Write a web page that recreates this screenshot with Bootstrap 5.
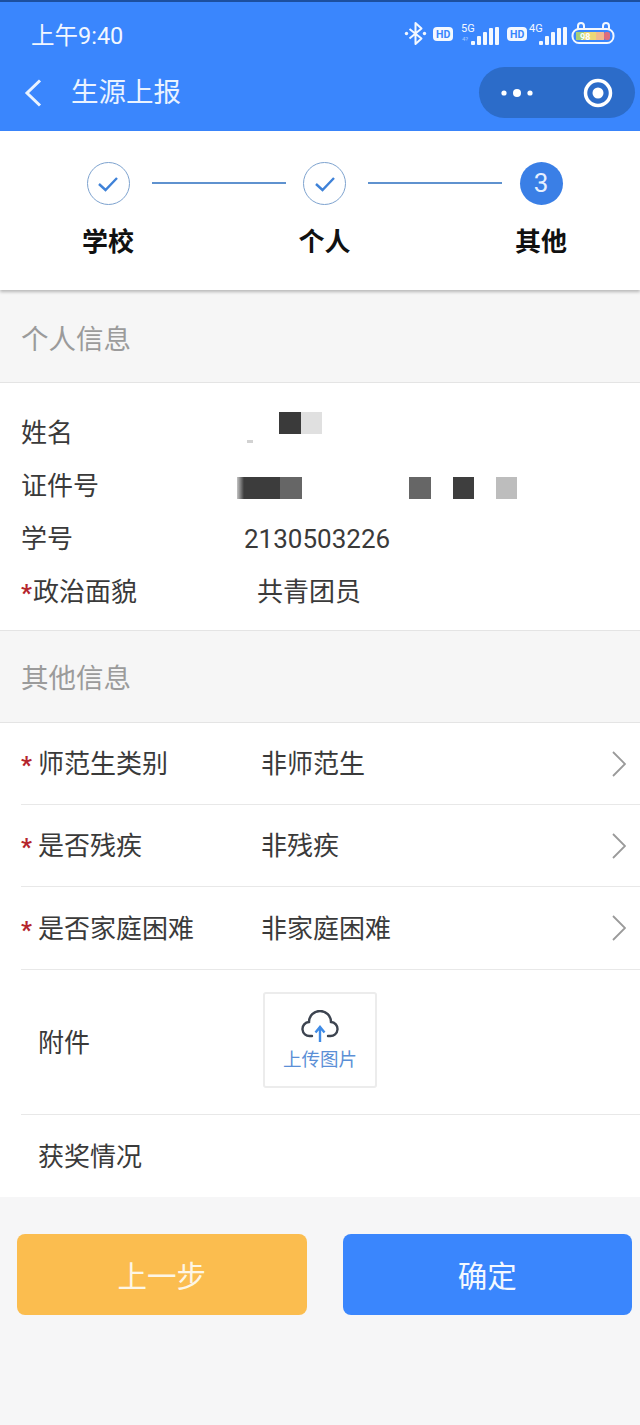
<!DOCTYPE html>
<html lang="zh-CN">
<head>
<meta charset="utf-8">
<link href="https://cdn.jsdelivr.net/npm/bootstrap@5.3.0/dist/css/bootstrap.min.css" rel="stylesheet">
<style>
html,body{margin:0;background:#f6f6f7;}
body{width:640px;height:1425px;overflow:hidden;font-family:Roboto,"Noto Sans CJK SC",sans-serif;font-size:26px;color:#3a3a3a;line-height:1.2;}
.topbar{height:131px;background:#3a86fd;border-top:2px solid #1c4f9e;color:#fff;}
.statusline{height:51px;padding:19px 0 0 31px;}
.clock{font-size:23.5px;line-height:30px;color:#f2f7ff;}
.titleline{height:66px;padding:14px 5px 0 24px;}
.pagetitle{font-size:27.5px;line-height:51px;margin-left:28px;color:#eaf3ff;}
.capsule{width:156px;height:51px;border-radius:26px;background:#2c6cc9;}
.capsule-side{width:78px;}
.stepper{height:159px;background:#fff;box-shadow:0 2px 3px rgba(0,0,0,.25);position:relative;padding:31px 0 0 72px;}
.stepcol{width:72px;flex:none;}
.stepdot{width:43px;height:43px;border-radius:50%;border:1.5px solid #7ea3cf;}
.stepdot-on{background:#3a7fe6;border:0;color:#e6f0ff;font-size:26px;}
.stepline{height:2px;width:134px;background:#5f92cf;margin:20px 3px 0 7.5px;flex:none;}
.steplabel{font-size:26px;font-weight:700;color:#111;margin-top:20px;line-height:34px;white-space:nowrap;}
.secthead{background:#f6f6f6;color:#9b9b9b;padding-left:21px;font-size:27.5px;border-bottom:1px solid #e4e4e4;height:93px;}
.sh1{padding-top:33px;}
.sh2{padding-top:31px;border-top:1px solid #e4e4e4;}
.infoblock{background:#fff;height:247px;padding:24px 0 0 21px;}
.inforow{height:53px;line-height:53px;}
.infokey{width:223px;flex:none;}
.infokey-wide{width:236px;}
.req{color:#b5252d;font-size:24px;font-weight:700;display:inline-block;width:12px;line-height:1;}
.req-form{width:17px;}
.blot{height:22px;flex:none;}
.blotwrap1{padding-top:5px;}
.blotwrap2{padding-top:17px;}
.tinymark{display:block;width:6px;height:3px;background:#d2d2d2;margin:28px 0 0 3px;}
.b-spacer{width:35px;}
.b-dark{width:22px;background:#3a3a3a;}
.b-light{width:21px;background:#e0e0e0;}
.b-fade{width:43px;margin-left:-7px;background:linear-gradient(90deg,#c4c4c4 0,#3c3c3c 7px);}
.b-mid{width:22px;background:#666;}
.b-mid-gap{margin-left:107px;}
.b-dark2{width:21px;margin-left:22px;background:#3e3e3e;}
.b-pale{width:21px;margin-left:22px;background:#bdbdbd;}
.formblock{background:#fff;}
.formrow{margin-left:21px;border-bottom:1px solid #e8e8e8;height:82px;}
.formrow-tall{height:83px;}
.formrow-upload{height:145px;}
.formrow-last{border-bottom:0;}
.fkey{width:241px;flex:none;padding-top:3px;}
.fkey-indent{padding-left:17px;}
.fval{flex:1;padding-top:3px;margin-left:-1px;}
.chev{margin-right:14px;}
.upbox{width:114px;height:96px;border:2px solid #ececec;border-radius:3px;color:#5b8fd6;font-size:18.5px;background:#fff;margin-top:-4px;margin-left:1px;}
.uplabel{margin-top:7px;line-height:22px;}
.actionbar{padding:37px 8px 0 17px;gap:36px;}
.act{width:290px;height:81px;border:0;border-radius:8px;color:#fdf6e6;font-size:29.5px;padding:5px 0 0;}
.act-y{background:#fbbd4f;}
.act-y:hover,.act-y:active{background:#fbbd4f;color:#fdf6e6;}
.act-b{background:#3a86fd;color:#f3f8ff;}
.act-b:hover,.act-b:active{background:#3a86fd;color:#f3f8ff;}
</style>
</head>
<body>
<div class="topbar">
  <div class="statusline d-flex justify-content-between align-items-start">
    <span class="clock">上午9:40</span>
    <svg width="240" height="30" viewBox="0 0 240 30" fill="none" font-family="Roboto,sans-serif">
      <path d="M9.500 8l12 9.500-6 5.500V2l6 5.500-12 10" stroke="#f3f8ff" stroke-width="2" stroke-linejoin="round"/>
      <circle cx="6.500" cy="12.500" r="1.700" fill="#f3f8ff"/><circle cx="24.500" cy="12.500" r="1.700" fill="#f3f8ff"/>
      <rect x="33" y="6" width="20" height="14" rx="4" fill="#f3f8ff"/>
      <text x="36" y="17" font-size="10.500" font-weight="700" fill="#3a86fd">HD</text>
      <text x="61" y="11" font-size="11" fill="#f3f8ff">5G</text>
      <text x="62" y="20" font-size="6" fill="#a9ccff">4?</text>
      <g fill="#f3f8ff"><rect x="71" y="20" width="4" height="4" rx="1"/><rect x="77" y="15" width="4" height="9" rx="1"/><rect x="83" y="11" width="4" height="13" rx="1"/><rect x="89" y="7" width="4" height="17" rx="1"/><rect x="95" y="6" width="4" height="18" rx="1"/></g>
      <rect x="107" y="6" width="20" height="14" rx="4" fill="#f3f8ff"/>
      <text x="110" y="17" font-size="10.500" font-weight="700" fill="#3a86fd">HD</text>
      <text x="129" y="11" font-size="11" fill="#f3f8ff">4G</text>
      <g fill="#f3f8ff"><rect x="139" y="20" width="4" height="4" rx="1"/><rect x="145" y="15" width="4" height="9" rx="1"/><rect x="151" y="11" width="4" height="13" rx="1"/><rect x="157" y="7" width="4" height="17" rx="1"/><rect x="163" y="6" width="4" height="18" rx="1"/></g>
      <rect x="172.500" y="8" width="41" height="14" rx="6.500" fill="none" stroke="#f3f8ff" stroke-width="2"/>
      <path d="M178 8V5a3 3 0 016 0v3M203 8V5a3 3 0 016 0v3" stroke="#f3f8ff" stroke-width="2"/>
      <rect x="176" y="11" width="8" height="8" fill="#a5cf79"/><rect x="184" y="11" width="12" height="8" fill="#ecd777"/><rect x="196" y="11" width="8" height="8" fill="#f2b98e"/><rect x="204" y="11" width="6" height="8" rx="2" fill="#dd6d7d"/>
      <text x="180" y="18.500" font-size="9" font-weight="700" fill="#fff">98</text>
    </svg>
  </div>
  <div class="titleline d-flex align-items-start">
    <svg width="19" height="51" viewBox="0 0 19 51" fill="none"><path d="M16 13.500L3 26l13 12.500" stroke="#eaf3ff" stroke-width="3"/></svg>
    <span class="pagetitle flex-grow-1">生源上报</span>
    <div class="capsule d-flex align-items-center">
      <div class="capsule-side d-flex justify-content-center">
        <svg width="34" height="12" viewBox="0 0 34 12"><circle cx="3" cy="6" r="2.600" fill="#fff"/><circle cx="16" cy="6" r="4" fill="#fff"/><circle cx="29" cy="6" r="2.600" fill="#fff"/></svg>
      </div>
      <div class="capsule-side d-flex justify-content-center">
        <svg width="30" height="30" viewBox="0 0 30 30" class="ms-1"><circle cx="15" cy="15" r="12.500" fill="none" stroke="#fff" stroke-width="3.500"/><circle cx="15" cy="15" r="5.500" fill="#fff"/></svg>
      </div>
    </div>
  </div>
</div>

<div class="stepper d-flex">
  <div class="stepcol d-flex flex-column align-items-center">
    <div class="stepdot d-flex align-items-center justify-content-center"><svg width="22" height="16" viewBox="0 0 22 16" fill="none"><path d="M2 8l6.500 6L20 2" stroke="#3f82d8" stroke-width="2.400"/></svg></div>
    <div class="steplabel">学校</div>
  </div>
  <div class="stepline"></div>
  <div class="stepcol d-flex flex-column align-items-center">
    <div class="stepdot d-flex align-items-center justify-content-center"><svg width="22" height="16" viewBox="0 0 22 16" fill="none"><path d="M2 8l6.500 6L20 2" stroke="#3f82d8" stroke-width="2.400"/></svg></div>
    <div class="steplabel">个人</div>
  </div>
  <div class="stepline"></div>
  <div class="stepcol d-flex flex-column align-items-center">
    <div class="stepdot stepdot-on d-flex align-items-center justify-content-center">3</div>
    <div class="steplabel">其他</div>
  </div>
</div>

<div class="secthead sh1">个人信息</div>
<div class="infoblock">
  <div class="inforow d-flex"><span class="infokey">姓名</span>
    <span class="blotwrap1 d-flex align-items-start"><span class="blot b-spacer"><span class="tinymark"></span></span><span class="blot b-dark"></span><span class="blot b-light"></span></span></div>
  <div class="inforow d-flex"><span class="infokey">证件号</span>
    <span class="blotwrap2 d-flex align-items-start"><span class="blot b-fade"></span><span class="blot b-mid"></span><span class="blot b-mid b-mid-gap"></span><span class="blot b-dark2"></span><span class="blot b-pale"></span></span></div>
  <div class="inforow d-flex"><span class="infokey">学号</span><span>2130503226</span></div>
  <div class="inforow d-flex"><span class="infokey infokey-wide"><span class="req">*</span>政治面貌</span><span>共青团员</span></div>
</div>

<div class="secthead sh2">其他信息</div>
<div class="formblock">
  <div class="formrow d-flex align-items-center">
    <span class="fkey"><span class="req req-form">*</span>师范生类别</span><span class="fval">非师范生</span>
    <svg class="chev" width="14" height="26" viewBox="0 0 14 26" fill="none"><path d="M1 1l12 12L1 25" stroke="#9a9a9a" stroke-width="1.800"/></svg>
  </div>
  <div class="formrow d-flex align-items-center">
    <span class="fkey"><span class="req req-form">*</span>是否残疾</span><span class="fval">非残疾</span>
    <svg class="chev" width="14" height="26" viewBox="0 0 14 26" fill="none"><path d="M1 1l12 12L1 25" stroke="#9a9a9a" stroke-width="1.800"/></svg>
  </div>
  <div class="formrow formrow-tall d-flex align-items-center">
    <span class="fkey"><span class="req req-form">*</span>是否家庭困难</span><span class="fval">非家庭困难</span>
    <svg class="chev" width="14" height="26" viewBox="0 0 14 26" fill="none"><path d="M1 1l12 12L1 25" stroke="#9a9a9a" stroke-width="1.800"/></svg>
  </div>
  <div class="formrow formrow-upload d-flex align-items-center">
    <span class="fkey fkey-indent">附件</span>
    <div class="upbox d-flex flex-column align-items-center justify-content-center">
      <svg width="38" height="32" viewBox="0 0 38 32" fill="none"><path d="M11 26H9a7 7 0 01-1-14 11 11 0 0122 0 7 7 0 01-1 14h-2" stroke="#3d4450" stroke-width="2.400" stroke-linecap="round"/><path d="M19 32V18M14.500 22.500L19 17l4.500 5.500" stroke="#3f8be6" stroke-width="2.400"/></svg>
      <span class="uplabel">上传图片</span>
    </div>
  </div>
  <div class="formrow formrow-last d-flex align-items-center"><span class="fkey fkey-indent">获奖情况</span></div>
</div>

<div class="actionbar d-flex">
  <button type="button" class="btn act act-y">上一步</button>
  <button type="button" class="btn act act-b">确定</button>
</div>
<script src="https://cdn.jsdelivr.net/npm/bootstrap@5.3.0/dist/js/bootstrap.bundle.min.js"></script>
</body>
</html>
